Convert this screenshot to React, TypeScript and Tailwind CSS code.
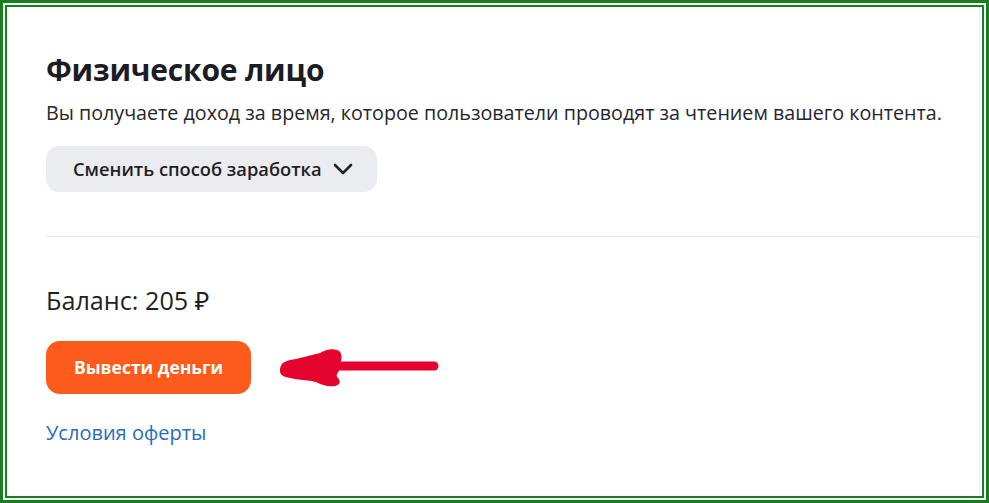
function RedArrow() {
  return (
    <svg width="162" height="42" viewBox="0 0 162 42" className="shrink-0">
      <line x1="56" y1="19" x2="156" y2="19" stroke="#e3032d" strokeWidth="9" strokeLinecap="round" />
      <path
        d="M3 19 C4 15 10 13 18 12 C26 10 34 8 42 6 C47 3 54 1 59 3 C64 5 64 9 63 14 L62 22 C60 26 57 28 60 31 C63 34 62 38 57 39 C50 40 44 38 38 35 C30 33 20 33 12 31 C6 30 2 28 2 24 C2 22 2 20 3 19 Z"
        fill="#e3032d"
      />
    </svg>
  );
}

export default function App() {
  return (
    <div className="w-[989px] h-[503px] bg-white border-[3px] border-[#17801c] p-[2px]" style={{ fontFamily: '"Open Sans", "Noto Sans", sans-serif' }}>
      <div className="h-full border-2 border-[#17801c] bg-white overflow-hidden">
        <div className="h-full border-r border-[#ededed] mr-[2px] pt-[44px] pl-[39px]">
          <h1 className="text-[30px] leading-[38px] font-bold text-[#1c1c24] tracking-[-0.2px]">Физическое лицо</h1>
          <p className="mt-[11px] text-[19.7px] leading-[26px] text-[#26262b] whitespace-nowrap">
            Вы получаете доход за время, которое пользователи проводят за чтением вашего контента.
          </p>
          <button className="mt-[20px] h-[46px] w-[331px] rounded-[13px] bg-[#ebecf0] flex items-center pl-[27px] gap-[11px] text-[18.3px] font-semibold text-[#1f1f24]">
            Сменить способ заработка
            <svg width="20" height="14" viewBox="0 0 20 14">
              <polyline points="2,3 10,11 18,3" fill="none" stroke="#222" strokeWidth="2.6" strokeLinecap="round" strokeLinejoin="round" />
            </svg>
          </button>
          <div className="mt-[44px] h-px bg-[#e8e8e8]" />
          <div className="mt-[47px] text-[25.2px] leading-[32px] text-[#1f1f24]">Баланс: 205 ₽</div>
          <div className="mt-[25px] flex items-center gap-[27px]">
            <button className="h-[53px] w-[205px] rounded-[14px] bg-[#fd5b1b] text-white text-[17.5px] font-bold">
              Вывести деньги
            </button>
            <RedArrow />
          </div>
          <a className="block mt-[25px] text-[20px] leading-[28px] text-[#2a6cb8]">Условия оферты</a>
        </div>
      </div>
    </div>
  );
}
